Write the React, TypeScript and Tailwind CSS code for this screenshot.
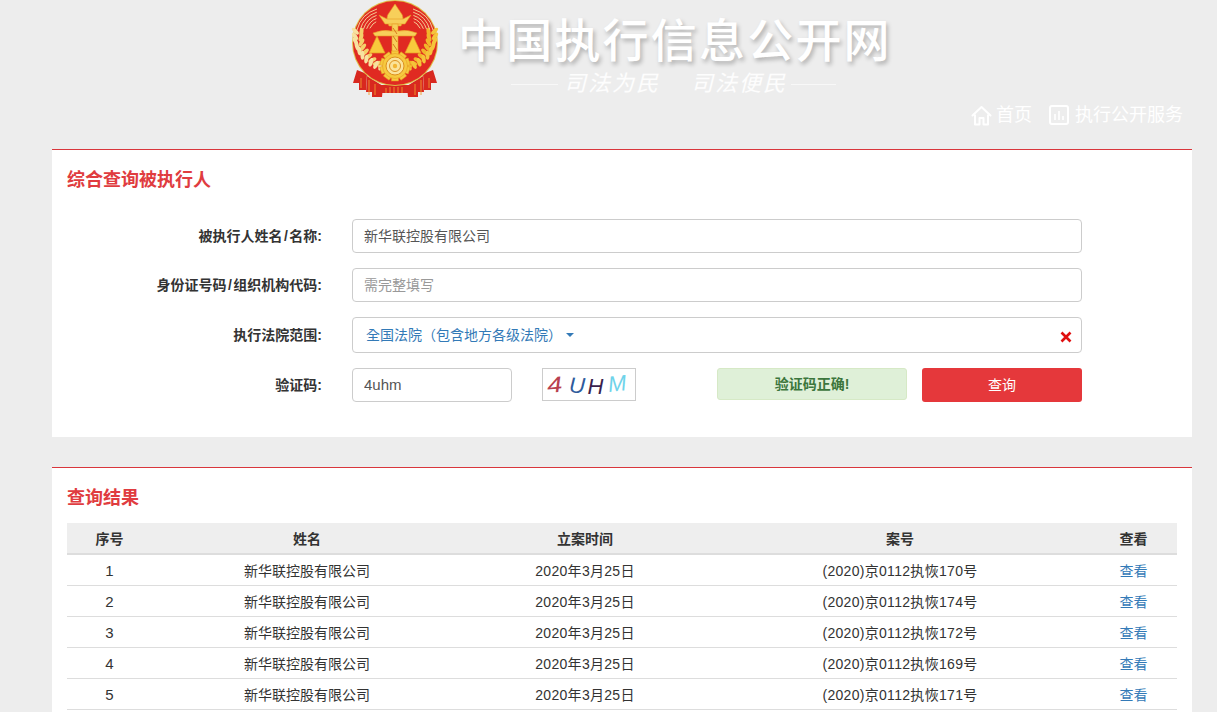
import React from "react";

const FONT = '"Liberation Sans","Noto Sans CJK SC",sans-serif';

function Wheat({ flip }: { flip?: boolean }) {
  const pts: { x: number; y: number; ang: number }[] = [];
  for (let i = 0; i < 12; i++) {
    const t = (i / 11) * 1.75 + 0.2;
    const x = 50 - 37 * Math.cos(t - 0.35);
    const y = 36 + 32 * Math.sin(t - 0.35);
    pts.push({ x, y, ang: -20 + i * 9 });
  }
  return (
    <g transform={flip ? "translate(100 0) scale(-1 1)" : undefined}>
      {pts.map((p, i) => (
        <g key={i}>
          <ellipse cx={p.x - 3} cy={p.y} rx="2" ry="4.4" fill={flip ? "#f5c53a" : "#f7e2a0"} transform={`rotate(${p.ang - 25} ${p.x - 3} ${p.y})`} />
          <ellipse cx={p.x + 3} cy={p.y + 1} rx="2" ry="4.4" fill={flip ? "#f1b52a" : "#f4d06a"} transform={`rotate(${p.ang + 30} ${p.x + 3} ${p.y + 1})`} />
        </g>
      ))}
      {[0, 1, 2, 3, 4].map((i) => (
        <path key={i} d={`M${12 + i * 3.2} ${30 - i * 0.4} Q${16 + i * 3} ${14 + i * 2.2} ${32 - i * 0.2} ${9 + i * 3.2}`} fill="none" stroke="#f6dca0" strokeWidth="0.9" />
      ))}
    </g>
  );
}

function Emblem() {
  const teeth = Array.from({ length: 10 }, (_, i) => i * 36);
  return (
    <svg width="100" height="105" viewBox="0 0 100 105" className="shrink-0">
      <g fill="#d8281f">
        <path d="M12 70 L22 74 L21 90 L14 90 L14 83 L8 83 Z" />
        <path d="M88 70 L78 74 L79 90 L86 90 L86 83 L92 83 Z" />
        <path d="M22 76 L38 86 L37 97 L27 97 L27 92 L21 92 Z" />
        <path d="M78 76 L62 86 L63 97 L73 97 L73 92 L79 92 Z" />
        <path d="M36 85 H64 V93 H36 Z" />
      </g>
      <g stroke="#f29a2e" strokeWidth="0.9" fill="none">
        <path d="M16 78 V88 M24 80 V95 M30 84 V95 M76 80 V95 M70 84 V95 M84 78 V88" />
        <path d="M41 88 V93 M45 87 V93 M49 87 V93 M53 87 V93 M57 87 V93" />
      </g>
      <circle cx="50" cy="43" r="43" fill="#e0bf4a" />
      <circle cx="50" cy="43" r="42" fill="#e02a22" />
      <Wheat />
      <Wheat flip />
      <g fill="#f7cf5a" stroke="#e89a22" strokeWidth="0.6">
        <path d="M44 26 Q40 17 44 13 L50 4 L56 13 Q60 17 56 26 Z" />
        <path d="M34 15 L42 19 H58 L66 15 L60 24 H40 Z" />
        <rect x="47" y="24" width="6" height="36" />
        <path d="M28 33 Q38 29 46 31 H54 Q62 29 72 33 L70 36 H30 Z" />
      </g>
      <path d="M48 28 L52 34 M48 36 L52 42 M48 44 L52 50" stroke="#d67a1c" strokeWidth="1" />
      <path d="M32 36 L24 53 H40 Z M68 36 L60 53 H76 Z" fill="#f8c93c" stroke="#e89a22" strokeWidth="0.7" />
      <g fill="#f6c93f" stroke="#e2941e" strokeWidth="0.5">
        {teeth.map((d) => (
          <rect key={d} x="46.5" y="51" width="7" height="6" transform={`rotate(${d} 50 66)`} />
        ))}
        <circle cx="50" cy="66" r="12.5" />
      </g>
      <circle cx="50" cy="66" r="9" fill="#fbe39a" stroke="#dc8f1e" strokeWidth="1" />
      <circle cx="50" cy="66" r="5.5" fill="none" stroke="#dc8f1e" strokeWidth="1" />
      <circle cx="50" cy="66" r="2.2" fill="#f2b535" />
    </svg>
  );
}

function Label({ children }: { children: React.ReactNode }) {
  return <div className="w-[255px] text-right text-[14px] font-bold whitespace-nowrap text-[#333333]">{children}</div>;
}

const rows = [
  ["1", "170"],
  ["2", "174"],
  ["3", "172"],
  ["4", "169"],
  ["5", "171"],
];

export default function App() {
  return (
    <div className="h-[712px] overflow-hidden bg-[#ededed]" style={{ fontFamily: FONT }}>
      <header className="h-[149px]">
        <div className="flex h-[100px] pl-[345px]">
          <Emblem />
          <div className="ml-[13px] flex flex-col">
            <div className="mt-[11px] h-[60px] text-[46px] leading-[60px] font-medium tracking-[2.2px] whitespace-nowrap text-white [text-shadow:2px_3px_4px_rgba(0,0,0,0.25)]">
              中国执行信息公开网
            </div>
            <div className="flex items-center pl-[53px]">
              <div className="h-px w-[47px] bg-white/60" />
              <div className="ml-[6px] w-[94px] text-[22px] leading-[26px] tracking-[2px] whitespace-nowrap text-white/90 italic">司法为民</div>
              <div className="ml-[33px] w-[94px] text-[22px] leading-[26px] tracking-[2px] whitespace-nowrap text-white/90 italic">司法便民</div>
              <div className="ml-[6px] h-px w-[45px] bg-white/60" />
            </div>
          </div>
        </div>
        <nav className="flex h-[30px] items-center justify-end pr-[34px] text-[18px] leading-[30px] text-white">
          <svg width="21" height="21" viewBox="0 0 21 21" fill="none" stroke="#fff" strokeWidth="2" strokeLinejoin="round" className="shrink-0">
            <path d="M1.5 10.5 L10.5 2 L19.5 10.5" strokeLinecap="round" />
            <path d="M4 9.5 V19.5 H8.5 V13 H12.5 V19.5 H17 V9.5" />
          </svg>
          <span className="ml-[4px]">首页</span>
          <svg width="20" height="20" viewBox="0 0 20 20" fill="none" stroke="#fff" strokeWidth="2" className="ml-[17px] shrink-0">
            <rect x="1" y="1" width="18" height="18" rx="2" />
            <path d="M6 9 V15 M10 6 V15 M14 11 V15" strokeWidth="1.6" />
          </svg>
          <span className="ml-[6px]">执行公开服务</span>
        </nav>
      </header>

      <main className="mx-[52px] w-[1140px]">
        <section className="h-[288px] border-t border-solid border-t-[#d9363c] bg-white px-[15px]">
          <h2 className="mt-[17px] h-[26px] text-[18px] leading-[26px] font-bold text-[#e03c40]">综合查询被执行人</h2>
          <div className="mt-[26px] flex h-[34px] items-center">
            <Label>
              被执行人姓名<span className="mx-[1.5px]">/</span>名称:
            </Label>
            <input readOnly value="新华联控股有限公司" className="ml-[30px] h-[34px] w-[730px] rounded-[4px] border border-[#cccccc] bg-white px-[11px] pb-[2px] text-[14px] text-[#555555] outline-none" />
          </div>
          <div className="mt-[15px] flex h-[34px] items-center">
            <Label>
              身份证号码<span className="mx-[1.5px]">/</span>组织机构代码:
            </Label>
            <input readOnly placeholder="需完整填写" className="ml-[30px] h-[34px] w-[730px] rounded-[4px] border border-[#cccccc] bg-white px-[11px] text-[14px] text-[#555555] outline-none placeholder:text-[#999999]" />
          </div>
          <div className="mt-[15px] flex h-[36px] items-center">
            <Label>执行法院范围:</Label>
            <div className="ml-[30px] flex h-[36px] w-[730px] items-center rounded-[4px] border border-[#cccccc] bg-white pr-[9px] pl-[13px] text-[14px] text-[#337ab7]">
              <span style={{ fontFamily: '"Liberation Sans","Noto Sans CJK TC",sans-serif' }}>全国法院（包含地方各级法院）</span>
              <span className="ml-[4px] h-0 w-0 border-x-[4px] border-t-[4px] border-x-transparent border-t-[#337ab7]" />
              <svg width="12" height="12" viewBox="0 0 12 12" className="mt-[4px] ml-auto" stroke="#e01010" strokeWidth="2.6" fill="none">
                <path d="M1.5 1.5 L10.5 10.5 M10.5 1.5 L1.5 10.5" />
              </svg>
            </div>
          </div>
          <div className="mt-[15px] flex h-[34px] items-start">
            <div className="flex h-[34px] items-center">
              <Label>验证码:</Label>
            </div>
            <input readOnly value="4uhm" className="ml-[30px] h-[34px] w-[160px] rounded-[4px] border border-[#cccccc] bg-white px-[11px] pb-[2px] text-[15px] text-[#555555] outline-none" />
            <div className="ml-[30px] flex h-[33px] w-[94px] items-center justify-center gap-[3px] border border-[#cccccc] bg-white pt-[1px] text-[22px] leading-none italic">
              <span className="inline-block w-[17px] scale-x-125 -rotate-6 text-[#b8404f]">4</span>
              <span className="inline-block w-[16px] translate-y-[1px] rotate-3 text-[#2f5b9c]">U</span>
              <span className="inline-block w-[17px] translate-y-[2px] text-[#3a1f4d]">H</span>
              <span className="inline-block w-[22px] -translate-y-[1px] -rotate-6 text-[#6fd3ea]">M</span>
            </div>
            <div className="ml-[81px] flex h-[32px] w-[190px] items-center justify-center rounded-[3px] border border-[#d6e9c6] bg-[#dff0d8] text-[14px] font-bold text-[#3c763d]">验证码正确!</div>
            <button className="ml-[15px] h-[34px] w-[160px] rounded-[3px] bg-[#e5383b] text-[14px] text-white">查询</button>
          </div>
        </section>

        <section className="mt-[30px] border-t border-solid border-t-[#d9363c] bg-white px-[15px] pb-[20px]">
          <h2 className="mt-[17px] h-[26px] text-[18px] leading-[26px] font-bold text-[#e03c40]">查询结果</h2>
          <table className="mt-[12px] w-[1110px] table-fixed border-collapse text-[14px] text-[#333333]">
            <colgroup>
              <col className="w-[85px]" />
              <col className="w-[310px]" />
              <col className="w-[246px]" />
              <col className="w-[384px]" />
              <col className="w-[85px]" />
            </colgroup>
            <thead>
              <tr className="h-[31px] border-b-2 border-[#dddddd] bg-[#eeeeee]">
                <th className="pt-[2px] text-center font-bold">序号</th>
                <th className="pt-[2px] text-center font-bold">姓名</th>
                <th className="pt-[2px] text-center font-bold">立案时间</th>
                <th className="pt-[2px] text-center font-bold">案号</th>
                <th className="pt-[2px] pr-[2px] text-center font-bold">查看</th>
              </tr>
            </thead>
            <tbody>
              {rows.map(([n, c]) => (
                <tr key={n} className="h-[31px] border-b border-[#dddddd]">
                  <td className="pt-[3px] text-center text-[15px]">{n}</td>
                  <td className="pt-[3px] text-center">新华联控股有限公司</td>
                  <td className="pt-[3px] text-center tracking-[0.3px]">2020年3月25日</td>
                  <td className="pt-[3px] text-center tracking-[0.3px]">(2020)京0112执恢{c}号</td>
                  <td className="pt-[3px] pr-[2px] text-center text-[#337ab7]">查看</td>
                </tr>
              ))}
            </tbody>
          </table>
        </section>
      </main>
    </div>
  );
}
